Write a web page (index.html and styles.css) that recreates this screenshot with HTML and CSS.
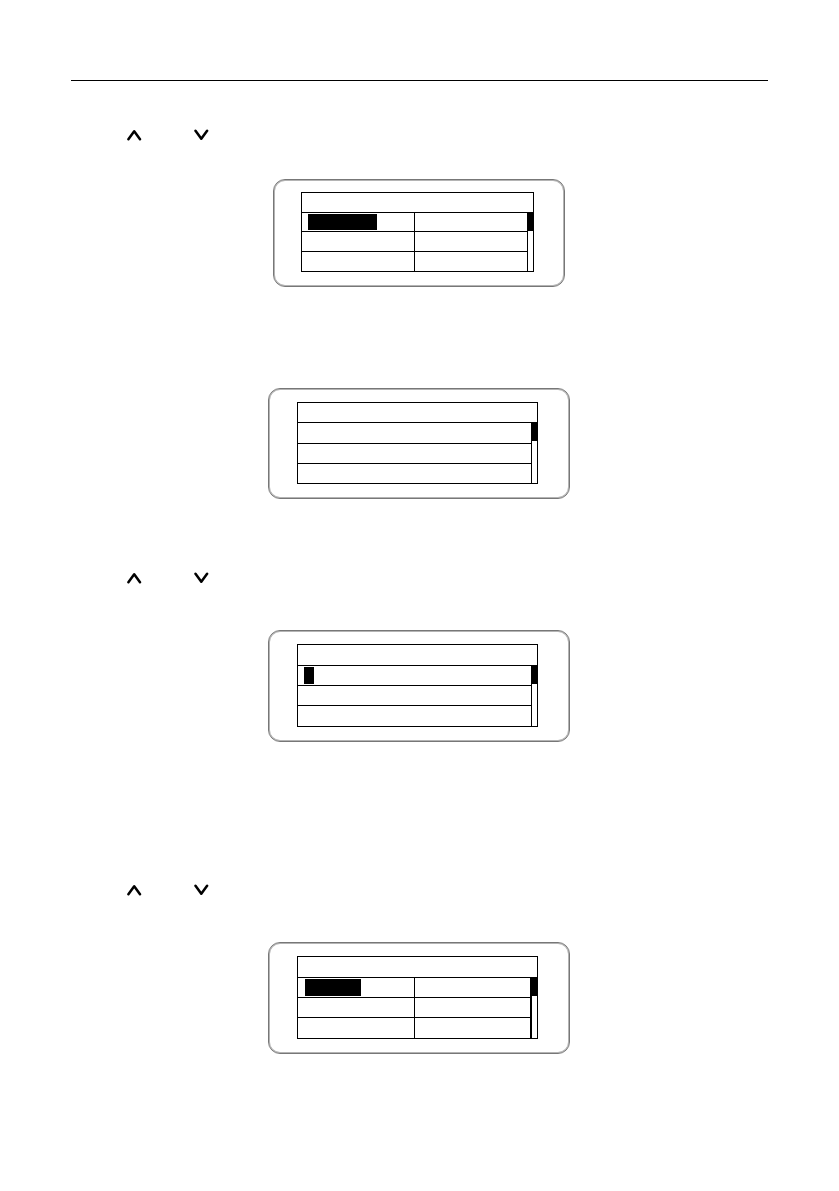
FILE: index.html
```
<!DOCTYPE html>
<html lang="en">
<head>
  <meta charset="UTF-8" />
  <meta name="viewport" content="width=device-width, initial-scale=1" />
  <title>Display menus</title>
  <link rel="stylesheet" href="styles.css">
</head>
<body>
  <svg class="symbols" aria-hidden="true">
    <symbol id="up" viewBox="0 0 15 12"><path d="M1.4 10.3 L7.2 2.2 L13 10.3" /></symbol>
    <symbol id="down" viewBox="0 0 15 12"><path d="M1.5 1.7 L7.3 9.8 L13.1 1.7" /></symbol>
  </svg>

  <div class="page">
    <header class="page-header"></header>

    <main>
      <section class="step step-first">
        <div class="keys">
          <svg class="key" role="img" aria-label="Up"><use href="#up" /></svg>
          <svg class="key" role="img" aria-label="Down"><use href="#down" /></svg>
        </div>
        <div class="panel panel-small">
          <div class="lcd lcd-small">
            <div class="title"></div>
            <div class="cell left"><div class="selected selected-wide"></div></div>
            <div class="cell"></div>
            <div class="cell left"></div>
            <div class="cell"></div>
            <div class="cell left last"></div>
            <div class="cell last"></div>
            <div class="scrollbar"><div class="thumb"></div></div>
          </div>
        </div>
      </section>

      <section class="step step-result">
        <div class="panel">
          <div class="lcd lcd-list lcd-result">
            <div class="title"></div>
            <div class="cell"></div>
            <div class="cell"></div>
            <div class="cell last"></div>
            <div class="scrollbar"><div class="thumb"></div></div>
          </div>
        </div>
      </section>

      <section class="step step-edit">
        <div class="keys">
          <svg class="key" role="img" aria-label="Up"><use href="#up" /></svg>
          <svg class="key" role="img" aria-label="Down"><use href="#down" /></svg>
        </div>
        <div class="panel">
          <div class="lcd lcd-list">
            <div class="title"></div>
            <div class="cell"><div class="selected selected-char"></div></div>
            <div class="cell"></div>
            <div class="cell last"></div>
            <div class="scrollbar"><div class="thumb"></div></div>
          </div>
        </div>
      </section>

      <section class="step step-last">
        <div class="keys">
          <svg class="key" role="img" aria-label="Up"><use href="#up" /></svg>
          <svg class="key" role="img" aria-label="Down"><use href="#down" /></svg>
        </div>
        <div class="panel">
          <div class="lcd lcd-menu">
            <div class="title"></div>
            <div class="cell left"><div class="selected"></div></div>
            <div class="cell"></div>
            <div class="cell left"></div>
            <div class="cell"></div>
            <div class="cell left last"></div>
            <div class="cell last"></div>
            <div class="scrollbar"><div class="thumb"></div></div>
          </div>
        </div>
      </section>
    </main>
  </div>
</body>
</html>
```

FILE: styles.css
```
* {
  box-sizing: border-box;
}

body {
  margin: 0;
  background-color: #fff;
  font-family: "Liberation Sans", Arial, sans-serif;
}

.symbols {
  display: none;
}

.page {
  padding: 0 71px 136px;
}

.page-header {
  height: 81px;
  border-bottom: 1px solid #000;
}

main {
  padding-right: 1px;
}

/* steps */
.step-first {
  padding-top: 48px;
}

.step-result {
  padding-top: 101px;
}

.step-edit {
  padding-top: 73px;
}

.step-last {
  padding-top: 142px;
}

.keys {
  display: flex;
  gap: 52px;
  padding-left: 56px;
  margin-bottom: 46px;
}

.step-first .keys {
  margin-bottom: 38px;
}

.key {
  width: 15px;
  height: 12px;
  fill: none;
  stroke: #000;
  stroke-width: 2.5;
  stroke-linecap: round;
  stroke-linejoin: round;
}

/* display frame */
.panel {
  width: 302px;
  margin: 0 auto;
  padding: 13px 31px 14px 28px;
  border: 1px solid #777;
  border-radius: 12px;
  box-shadow: inset 0 0 0 1px #b4b4b4;
}

.panel-small {
  width: 292px;
  padding: 12px 30px 14px 27px;
}

.lcd {
  display: grid;
  width: 241px;
  border: 1px solid #000;
  grid-template-columns: 117px 1fr 7px;
  grid-template-rows: 21px 20px 20px 20px;
}

.lcd-small {
  width: 233px;
  grid-template-columns: 113px 1fr 6px;
  grid-template-rows: 20px 19px 20px 19px;
}

.lcd-list {
  grid-template-columns: 1fr 6px;
}

.lcd-result {
  grid-template-rows: 20px 21px 20px 19px;
}

.title {
  grid-column: 1 / -1;
  border-bottom: 1px solid #000;
}

.cell {
  display: flex;
  padding: 1px 6px;
  border-bottom: 1px solid #000;
}

.left {
  border-right: 1px solid #000;
}

.last {
  border-bottom: none;
}

.selected {
  width: 56px;
  margin-left: 1px;
  background-color: #000;
}

.selected-wide {
  width: 69px;
  margin-left: 0;
}

.selected-char {
  width: 10px;
  margin-left: 0;
}

.scrollbar {
  grid-column: -2 / -1;
  grid-row: 2 / -1;
  border-left: 1px solid #000;
}

.lcd-menu .scrollbar {
  border-left-width: 2px;
}

.thumb {
  height: 18px;
  background-color: #000;
}
```
